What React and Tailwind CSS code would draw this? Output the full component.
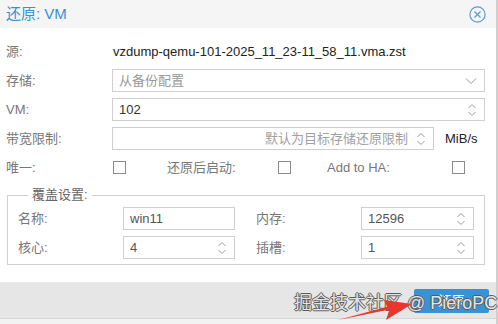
import React from 'react';

const FONT = "font-['Liberation_Sans','Noto_Sans_CJK_SC',sans-serif]";

function Spinner() {
  return (
    <svg width="10" height="16" viewBox="0 0 10 16" fill="none" stroke="#9a9a9a" strokeWidth="1">
      <path d="M1.5 6 L5 2.5 L8.5 6" />
      <path d="M1.5 10 L5 13.5 L8.5 10" />
    </svg>
  );
}

function ChevronDown() {
  return (
    <svg width="12" height="8" viewBox="0 0 12 8" fill="none" stroke="#9a9a9a" strokeWidth="1">
      <path d="M1 1.5 L6 6.5 L11 1.5" />
    </svg>
  );
}

function Box({ className = '', children, right }) {
  return (
    <div className={`h-[23px] border border-[#cfcfcf] bg-white flex items-center pl-[6px] pr-[7px] ${className}`}>
      <div className="flex-1 truncate">{children}</div>
      {right}
    </div>
  );
}

function Checkbox() {
  return <div className="w-[13px] h-[13px] border border-[#8a8a8a] bg-white" />;
}

function Label({ children, className = '' }) {
  return <div className={`text-[13px] text-[#777] shrink-0 ${className}`}>{children}</div>;
}

export default function App() {
  return (
    <div className={`w-[498px] h-[324px] flex bg-[#cfcfcf] overflow-hidden relative ${FONT}`}>
      <div className="w-[496px] h-full flex flex-col bg-white">
        {/* Header */}
        <div className="h-[28px] bg-[#f5f5f5] flex items-center justify-between pl-[6px] pr-[10px]">
          <div className="text-[15px] text-[#3a8fd3]">还原: VM</div>
          <svg width="17" height="17" viewBox="0 0 17 17" fill="none" stroke="#5c9bd1" strokeWidth="1.2">
            <circle cx="8.5" cy="8.5" r="7.6" />
            <path d="M5.5 5.5 L11.5 11.5 M11.5 5.5 L5.5 11.5" />
          </svg>
        </div>

        {/* Body */}
        <div className="flex-1 flex flex-col gap-[6px] pt-[12px] pl-[6px] pr-[11px] text-[13px]">
          <div className="h-[23px] flex items-center">
            <Label className="w-[107px]">源:</Label>
            <div className="text-[#222] text-[13px]">vzdump-qemu-101-2025_11_23-11_58_11.vma.zst</div>
          </div>
          <div className="h-[23px] flex items-center">
            <Label className="w-[106px]">存储:</Label>
            <Box className="flex-1" right={<ChevronDown />}>
              <span className="text-[#9a9a9a]">从备份配置</span>
            </Box>
          </div>
          <div className="h-[23px] flex items-center">
            <Label className="w-[106px] text-[#333]">VM:</Label>
            <Box className="flex-1" right={<Spinner />}>
              <span className="text-[#333]">102</span>
            </Box>
          </div>
          <div className="h-[23px] flex items-center">
            <Label className="w-[106px]">带宽限制:</Label>
            <Box className="w-[322px]" right={<Spinner />}>
              <div className="text-right pr-[8px] text-[#a0a0a0]">默认为目标存储还原限制</div>
            </Box>
            <div className="pl-[11px] text-[#222]">MiB/s</div>
          </div>
          <div className="h-[23px] flex items-center">
            <div className="w-[161px] flex items-center">
              <Label className="w-[107px]">唯一:</Label>
              <Checkbox />
            </div>
            <div className="w-[160px] flex items-center">
              <Label className="w-[111px]">还原后启动:</Label>
              <Checkbox />
            </div>
            <div className="flex items-center">
              <Label className="w-[125px] text-[#555]">Add to HA:</Label>
              <Checkbox />
            </div>
          </div>

          {/* Override fieldset */}
          <fieldset className="mt-[1px] ml-[1px] border border-[#d0d0d0] px-[10px] pb-[5px] pt-[3px] flex flex-col gap-[6px]">
            <legend className="ml-[10px] px-[4px] text-[13px] text-[#666] leading-[18px]">覆盖设置:</legend>
            <div className="flex items-center gap-[21px]">
              <div className="flex items-center">
                <Label className="w-[105px]">名称:</Label>
                <Box className="w-[112px]"><span className="text-[#555]">win11</span></Box>
              </div>
              <div className="flex items-center">
                <Label className="w-[105px]">内存:</Label>
                <Box className="w-[113px]" right={<Spinner />}><span className="text-[#555]">12596</span></Box>
              </div>
            </div>
            <div className="flex items-center gap-[21px]">
              <div className="flex items-center">
                <Label className="w-[105px]">核心:</Label>
                <Box className="w-[112px]" right={<Spinner />}><span className="text-[#555]">4</span></Box>
              </div>
              <div className="flex items-center">
                <Label className="w-[105px]">插槽:</Label>
                <Box className="w-[113px]" right={<Spinner />}><span className="text-[#555]">1</span></Box>
              </div>
            </div>
          </fieldset>
        </div>

        {/* Footer */}
        <div className="h-[36px] bg-[#e6e6e6] flex items-start justify-end pr-[7px] pt-[7px]">
          <div className="w-[75px] h-[24px] rounded-[2px] bg-[#3892d4] text-white text-[13px] flex items-center justify-center">还原</div>
        </div>
        <div className="h-[6px] bg-[#f2f2f2] border-t border-[#d6d6d6]" />
      </div>

      {/* Watermark */}
      <div className="absolute left-[294px] top-[292px] text-[18px] leading-[22px] text-[#e4e4e4] [text-shadow:1px_0_0_#5a5a5a,-1px_0_0_#5a5a5a,0_1px_0_#5a5a5a,0_-1px_0_#5a5a5a] font-['Liberation_Sans','Noto_Sans_CJK_SC',sans-serif] whitespace-nowrap">
        掘金技术社区 @ PieroPC
      </div>

      {/* Red arrow */}
      <svg className="absolute left-0 top-0" width="498" height="324" viewBox="0 0 498 324">
        <polygon points="338,320 392,309 390,306" fill="#e8362f" />
        <polygon points="384,300 412,304 386,320 389,311" fill="#e8362f" />
      </svg>
    </div>
  );
}
